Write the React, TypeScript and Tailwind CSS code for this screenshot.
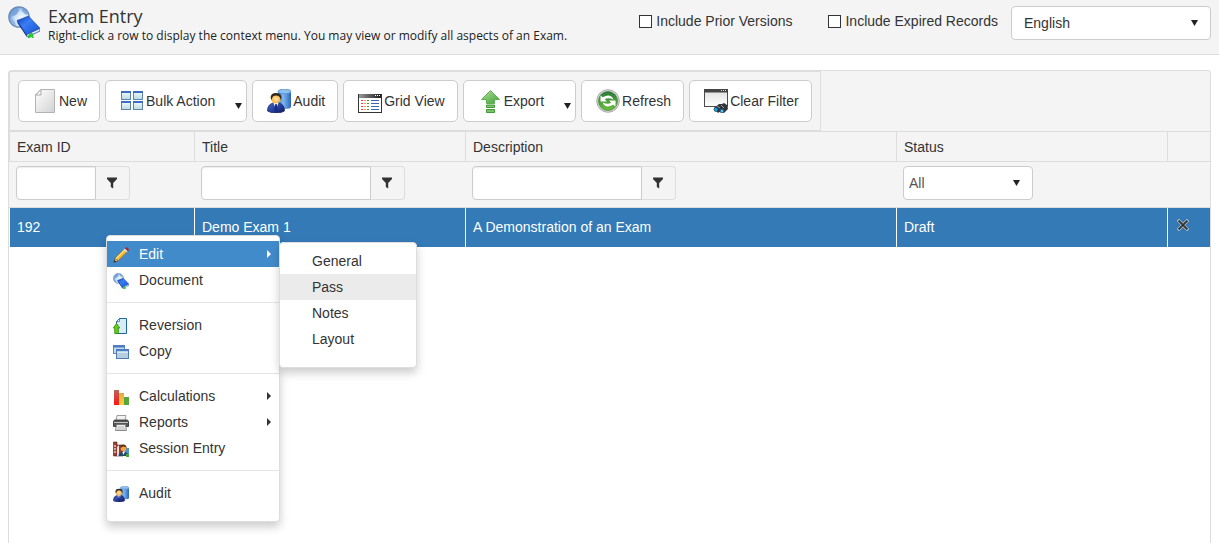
import type { ReactNode } from "react";

function BookIcon({ className }: { className: string }) {
  return (
    <svg viewBox="0 0 32 32" className={className} aria-hidden="true">
      <defs>
        <radialGradient id="globe" cx="0.65" cy="0.6" r="0.7">
          <stop offset="0" stopColor="#ffffff" />
          <stop offset="0.55" stopColor="#c9e0f8" />
          <stop offset="1" stopColor="#4f86cc" />
        </radialGradient>
        <linearGradient id="cover" x1="0" y1="0" x2="1" y2="1">
          <stop offset="0" stopColor="#0d3fae" />
          <stop offset="0.4" stopColor="#3a7df5" />
          <stop offset="1" stopColor="#1450cf" />
        </linearGradient>
      </defs>
      <circle cx="11" cy="11" r="10.2" fill="url(#globe)" stroke="#6c8bb3" strokeWidth="1.2" />
      <path d="M3 9q1-6 7-7l1 3-3 4-3 1zM14 2q5 1 6 7l-3-1-3-3z" fill="#6f9cd8" opacity="0.8" />
      <path d="M3 13q4 1 5 7-4-2-5-7z" fill="#8fb4e4" />
      <path d="M18.500 28.500 31.800 22.500l0.200 2.500-11.500 5.500-2 -0.500z" fill="#dfe7f8" stroke="#0d3cab" strokeWidth="0.700" />
      <path d="M9 14.500 20.500 10 31.800 22 18.500 28.500z" fill="url(#cover)" stroke="#0c38a0" strokeWidth="0.500" />
      <path d="M9 14.500 18.500 28.500 18.800 31 9.500 17z" fill="#0a2f91" />
      <path d="M21 28.500l3-1.500 1.500 5-2-1.200-3.500 1.200z" fill="#24d424" stroke="#0d9a1a" strokeWidth="0.500" />
    </svg>
  );
}

function NewIcon() {
  return (
    <svg viewBox="0 0 24 24" className="size-6" aria-hidden="true">
      <defs>
        <linearGradient id="paper" x1="0" y1="0" x2="1" y2="1">
          <stop offset="0" stopColor="#ffffff" />
          <stop offset="1" stopColor="#d2d2d2" />
        </linearGradient>
      </defs>
      <path d="M8 0.5h13.500v23h-19v-17.500z" fill="url(#paper)" stroke="#b3b3b3" />
      <path d="M2.500 6 8 0.500v5.500z" fill="#f4f4f4" stroke="#999" strokeWidth="0.8" />
    </svg>
  );
}

function BulkIcon() {
  return (
    <svg viewBox="0 0 24 24" className="size-6" aria-hidden="true">
      <defs>
        <linearGradient id="pane" x1="0" y1="0" x2="0" y2="1">
          <stop offset="0" stopColor="#f5fbfd" />
          <stop offset="1" stopColor="#b9d8e2" />
        </linearGradient>
      </defs>
      {[[1, 2], [13, 2], [1, 12], [13, 12]].map(([x, y]) => (
        <g key={`${x}-${y}`}>
          <rect x={x + 0.5} y={y + 0.5} width="9" height="8" fill="url(#pane)" stroke="#5d87a8" />
          <rect x={x} y={y} width="10" height="2" fill="#3c6fc4" />
        </g>
      ))}
    </svg>
  );
}

function AuditIcon({ className }: { className: string }) {
  return (
    <svg viewBox="0 0 24 24" className={className} aria-hidden="true">
      <defs>
        <linearGradient id="cylinder">
          <stop offset="0" stopColor="#3d7fcf" />
          <stop offset="0.4" stopColor="#7db7f2" />
          <stop offset="1" stopColor="#2c66b8" />
        </linearGradient>
        <radialGradient id="face" cx="0.5" cy="0.55" r="0.6">
          <stop offset="0" stopColor="#ffe9b0" />
          <stop offset="1" stopColor="#f79a1a" />
        </radialGradient>
        <linearGradient id="suit" x1="0" y1="0" x2="1" y2="1">
          <stop offset="0" stopColor="#4668c8" />
          <stop offset="1" stopColor="#0b1a66" />
        </linearGradient>
      </defs>
      <path d="M11 2.500v15q0 2.500 6.500 2.500t6.500-2.500v-15z" fill="url(#cylinder)" />
      <ellipse cx="17.500" cy="2.500" rx="6.500" ry="2.300" fill="#8fc0ee" stroke="#4b89cf" strokeWidth="0.8" />
      <path d="M0.500 22q0-7 6-8h5q6 1 6 8-3 2-8.500 2t-8.500-2z" fill="url(#suit)" stroke="#0c1b5c" strokeWidth="0.7" />
      <path d="M6.500 14h5l-2.500 6z" fill="#fff" />
      <path d="M8.300 15h1.500l0.700 6-1.500 2-1.400-2z" fill="#132b8c" />
      <circle cx="9" cy="9.500" r="5" fill="url(#face)" />
      <path d="M3.600 9q0-5 5.400-5t5.500 5l-1 2q0-3-2-4-2.500-1-5 0-1.500 1-1.800 4z" fill="#33281c" />
    </svg>
  );
}

function GridIcon() {
  const rows = [10, 13, 16, 19];
  return (
    <svg viewBox="0 0 24 24" className="size-6" aria-hidden="true">
      <defs>
        <linearGradient id="titlebar">
          <stop offset="0" stopColor="#999" />
          <stop offset="1" stopColor="#1c1c1c" />
        </linearGradient>
      </defs>
      <rect x="0.500" y="5.500" width="23" height="18" fill="#fff" stroke="#333" />
      <rect x="1" y="5" width="22" height="4" fill="url(#titlebar)" />
      <path d="M17 6.500h1M19 6.500h1M21 6.500h1" stroke="#fff" />
      {rows.map(y => (
        <g key={y} transform="translate(0 1.500)" strokeWidth="1">
          <path d={`M3 ${y}h2`} stroke="#e0483c" />
          <path d={`M6 ${y}h2`} stroke="#f3a23a" />
          <path d={`M9 ${y}h2`} stroke="#3e9e33" />
          <path d={`M13 ${y}h8`} stroke="#3f68b4" />
        </g>
      ))}
    </svg>
  );
}

function ExportIcon() {
  return (
    <svg viewBox="0 0 24 24" className="size-6" aria-hidden="true">
      <defs>
        <linearGradient id="up" x1="0" y1="0" x2="1" y2="1">
          <stop offset="0" stopColor="#b4e0a0" />
          <stop offset="1" stopColor="#3ba233" />
        </linearGradient>
      </defs>
      <path d="M12.500 1.500 21.500 10.500h-5v4h-8v-4h-5z" fill="url(#up)" stroke="#5fae4f" />
      <path d="M8.500 16h8v2.500h-8zM8.500 20.500h8v3h-8z" fill="#79c468" stroke="#459a3a" />
    </svg>
  );
}

function RefreshIcon() {
  return (
    <svg viewBox="0 0 24 24" className="size-6" aria-hidden="true">
      <defs>
        <linearGradient id="ball" x1="0" y1="0" x2="0" y2="1">
          <stop offset="0" stopColor="#2a7a38" />
          <stop offset="1" stopColor="#6cc03c" />
        </linearGradient>
      </defs>
      <circle cx="12" cy="12" r="11.300" fill="#dcdcdc" stroke="#a0a0a0" strokeWidth="0.900" />
      <circle cx="12" cy="12" r="9.600" fill="url(#ball)" stroke="#3c7a3a" strokeWidth="0.600" />
      <path d="M4.500 6.500v6h6.500l-2.200-2.200q3-2.300 8.700 0.200Q14.500 4 6.800 8.200z" fill="#fff" />
      <path d="M19.500 17.500v-6h-6.500l2.200 2.200q-3 2.300-8.700-0.200Q9.500 20 17.200 15.800z" fill="#fff" />
    </svg>
  );
}

function ClearFilterIcon() {
  return (
    <svg viewBox="0 0 24 24" className="size-6" aria-hidden="true">
      <defs>
        <linearGradient id="window" x1="0" y1="0" x2="0" y2="1">
          <stop offset="0" stopColor="#dedede" />
          <stop offset="1" stopColor="#ffffff" />
        </linearGradient>
      </defs>
      <rect x="0.500" y="0.500" width="23" height="17" fill="url(#window)" stroke="#4b4b4b" />
      <rect x="0" y="0" width="24" height="3.500" fill="#444" />
      <path d="M17 1.500h1M19 1.500h1M21 1.500h1" stroke="#ddd" />
      <path d="M10 19l5-4 3 0 2-1 3 2 1 4-4 4-3-2-3 2z" fill="#30343a" />
      <path d="M13 17l3 2M17 16l3 3" stroke="#99a" />
      <circle cx="12" cy="20.500" r="2" fill="#19a9f0" stroke="#16344a" strokeWidth="0.700" />
      <circle cx="18" cy="22" r="1.900" fill="#4cc6fb" stroke="#16344a" strokeWidth="0.700" />
    </svg>
  );
}

function PencilIcon() {
  return (
    <svg viewBox="0 0 16 16" className="size-4" aria-hidden="true">
      <path d="M1 15.300 2.200 11 5 13.800z" fill="#e8c79a" stroke="#5b3d1c" strokeWidth="0.600" />
      <path d="M0.600 15.600l1-2.600 1.700 1.600z" fill="#222" />
      <path d="M2.200 11 11 2.200 13.800 5 5 13.800z" fill="#f5b82e" stroke="#9a6412" strokeWidth="0.600" />
      <path d="M3.200 11.600 11.700 3.100" stroke="#ffe58c" strokeWidth="1.200" />
      <path d="M10.500 2.700 12 1.200 14.800 4l-1.500 1.500z" fill="#d5dbe2" />
      <path d="M12 1.200q1.500-1.200 3 0.200t-0.200 2.600z" fill="#c9281e" stroke="#8f1b14" strokeWidth="0.500" />
    </svg>
  );
}

function ReversionIcon() {
  return (
    <svg viewBox="0 0 16 16" className="size-4" aria-hidden="true">
      <path d="M6.500 0.500h7v15h-10v-12z" fill="#d7ecf8" stroke="#1d6698" />
      <path d="M3.500 3.500h3v-3z" fill="#fff" stroke="#1d6698" strokeWidth="0.700" />
      <path d="M3.500 5.500 6.800 10h-1.500v5.500h-3.600V10H0.300z" fill="#62cf16" stroke="#2c8a0a" strokeWidth="0.800" />
    </svg>
  );
}

function CopyIcon() {
  return (
    <svg viewBox="0 0 16 16" className="size-4" aria-hidden="true">
      <rect x="0.500" y="1.500" width="11" height="8" fill="#c5dae8" stroke="#5f86b5" />
      <path d="M0 2.500h12" stroke="#4a7ac4" strokeWidth="2" />
      <rect x="3.500" y="5.500" width="12" height="9" fill="#b5cfe0" stroke="#4f7bac" />
      <path d="M3 6.500h13" stroke="#4a7ecb" strokeWidth="2" />
      <path d="M4 8h11" stroke="#fff" />
    </svg>
  );
}

function ChartIcon() {
  return (
    <svg viewBox="0 0 16 16" className="size-4" aria-hidden="true">
      <defs>
        <linearGradient id="redbar" x1="0" y1="0" x2="0" y2="1">
          <stop offset="0" stopColor="#b9635a" />
          <stop offset="1" stopColor="#ff1515" />
        </linearGradient>
        <linearGradient id="yellowbar" x1="0" y1="0" x2="0" y2="1">
          <stop offset="0" stopColor="#e3a83f" />
          <stop offset="1" stopColor="#ffd23c" />
        </linearGradient>
      </defs>
      <rect x="1" y="1" width="5" height="15" fill="url(#redbar)" />
      <rect x="6" y="4" width="5" height="12" fill="url(#yellowbar)" />
      <rect x="11" y="8" width="5" height="8" fill="#55a63c" />
    </svg>
  );
}

function PrinterIcon() {
  return (
    <svg viewBox="0 0 16 16" className="size-4" aria-hidden="true">
      <path d="M4 0.500h9l-1 5H3z" fill="#f2f2f2" stroke="#888" strokeWidth="0.800" />
      <path d="M1.500 5h13l1 1.500v5h-15v-5z" fill="#555" stroke="#2c2c2c" strokeWidth="0.800" />
      <path d="M1 7.500h14" stroke="#c4c4c4" />
      <path d="M3.500 9.500h9l1 6h-11z" fill="#ededed" stroke="#6e6e6e" strokeWidth="0.800" />
      <path d="M4.500 12h7M4 14h8" stroke="#aaa" strokeWidth="0.800" />
    </svg>
  );
}

function SessionIcon() {
  return (
    <svg viewBox="0 0 16 16" className="size-4" aria-hidden="true">
      <path d="M0.500 1h3.500v3h6v11h-9.500z" fill="#993a2c" stroke="#54271f" strokeWidth="0.600" />
      <path d="M1 5h2M1 8h2M1 11h2" stroke="#d6d0c8" strokeWidth="1.500" />
      <path d="M4 15V6l2-2v11z" fill="#dfe2e6" />
      <path d="M12 7h4v8h-5z" fill="#4f91d5" />
      <path d="M5.500 15q0-4 5-4t5 4z" fill="#27436f" />
      <path d="M9.300 11h2.400l-1.200 3z" fill="#fff" />
      <circle cx="10.500" cy="7.500" r="2.800" fill="#f2a63a" />
      <path d="M7.500 7.500q0-4 3-4t3.200 4q-1-2-3-2t-3.200 2z" fill="#5a2f18" />
      <path d="M13 12.500l3 1V16h-3z" fill="#46a82f" />
    </svg>
  );
}

function FunnelIcon() {
  return (
    <svg viewBox="0 0 12 12" className="size-3" aria-hidden="true">
      <path d="M1 0.500h10v1.500L7.200 6v5.500l-2.400-1.500V6L1 2z" fill="#333" />
    </svg>
  );
}

function DownArrow({ className }: { className: string }) {
  return (
    <svg viewBox="0 0 7 6" className={`h-[6px] w-[7px] ${className}`} aria-hidden="true">
      <path d="M0 0h7L3.500 6z" fill="#222" />
    </svg>
  );
}

function ToolButton({ icon, label, menu }: { icon: ReactNode; label: string; menu?: boolean }) {
  return (
    <button
      type="button"
      className={`relative flex h-[42px] items-center gap-[2px] rounded-[5px] border border-[#ccc] bg-white pl-[14px] ${menu ? "pr-[31px]" : "pr-3"}`}
    >
      {icon}
      {label}
      {menu && <DownArrow className="absolute right-1 bottom-3" />}
    </button>
  );
}

function FilterBox({ label, width }: { label: string; width: string }) {
  return (
    <div className={`flex h-[34px] ${width}`}>
      <input
        type="text"
        aria-label={label}
        className="min-w-0 flex-1 rounded-l border border-[#ccc] bg-white px-2 shadow-[inset_0_1px_1px_rgba(0,0,0,0.08)]"
      />
      <button type="button" aria-label={`${label} options`} className="flex w-[34px] items-center justify-center rounded-r border border-l-0 border-[#ddd] pr-[2px]">
        <FunnelIcon />
      </button>
    </div>
  );
}

function MenuItem({ icon, label, active, sub }: { icon: ReactNode; label: string; active?: boolean; sub?: boolean }) {
  return (
    <li>
      <button
        type="button"
        role="menuitem"
        className={`flex h-[26px] w-full items-center gap-[10px] pr-2 pl-[6px] text-left ${active ? "bg-[#428bca] text-white" : ""}`}
      >
        <span className="pt-[2px]">{icon}</span>
        <span className="flex-1">{label}</span>
        {sub && (
          <svg viewBox="0 0 4 8" className="h-2 w-1" aria-hidden="true">
            <path d="M0 0 4 4 0 8z" fill="currentColor" />
          </svg>
        )}
      </button>
    </li>
  );
}

function Separator() {
  return <li role="separator" className="my-[9px] border-t border-[#e5e5e5]" />;
}

function ContextMenu() {
  return (
    <div className="absolute top-[164px] left-[97px] flex items-start">
      <ul role="menu" className="w-[174px] rounded border border-[#ddd] bg-white pt-[5px] pb-[15px] shadow-[0_5px_10px_rgba(0,0,0,0.2)]">
        <MenuItem icon={<PencilIcon />} label="Edit" active sub />
        <MenuItem icon={<BookIcon className="size-4" />} label="Document" />
        <Separator />
        <MenuItem icon={<ReversionIcon />} label="Reversion" />
        <MenuItem icon={<CopyIcon />} label="Copy" />
        <Separator />
        <MenuItem icon={<ChartIcon />} label="Calculations" sub />
        <MenuItem icon={<PrinterIcon />} label="Reports" sub />
        <MenuItem icon={<SessionIcon />} label="Session Entry" />
        <Separator />
        <MenuItem icon={<AuditIcon className="size-4" />} label="Audit" />
      </ul>
      <ul role="menu" className="mt-[7px] -ml-px w-[138px] rounded border border-[#ddd] bg-white pt-[5px] pb-[15px] shadow-[0_5px_10px_rgba(0,0,0,0.2)]">
        {["General", "Pass", "Notes", "Layout"].map(name => (
          <li key={name}>
            <button
              type="button"
              role="menuitem"
              className={`block h-[26px] w-full pl-8 text-left ${name === "Pass" ? "bg-[#ebebeb]" : ""}`}
            >
              {name}
            </button>
          </li>
        ))}
      </ul>
    </div>
  );
}

const columns = ["Exam ID", "Title", "Description", "Status", ""];
const record = ["192", "Demo Exam 1", "A Demonstration of an Exam", "Draft"];

export default function App() {
  return (
    <div className="flex min-h-screen flex-col bg-white font-['Liberation_Sans',Arial,sans-serif] text-sm text-[#333]">
      <header className="flex h-[55px] items-start border-b border-[#ddd] bg-[#f4f4f4] px-2 pt-[6px]">
        <BookIcon className="size-8 shrink-0" />
        <div className="ml-2 flex-1 font-['Open_Sans',sans-serif]">
          <h1 className="text-lg leading-[21px]">Exam Entry</h1>
          <p className="text-xs leading-[17px] text-[#222]">
            Right-click a row to display the context menu. You may view or modify all aspects of an Exam.
          </p>
        </div>
        <label className="mr-9 flex h-[30px] items-center gap-1">
          <input type="checkbox" className="size-[13px] appearance-none border border-[#333] bg-white" />
          Include Prior Versions
        </label>
        <label className="mr-[13px] flex h-[30px] items-center gap-1">
          <input type="checkbox" className="size-[13px] appearance-none border border-[#333] bg-white" />
          Include Expired Records
        </label>
        <div className="relative w-[200px]">
          <select aria-label="Language" className="h-[34px] w-full appearance-none rounded border border-[#ccc] bg-white px-3">
            <option>English</option>
          </select>
          <DownArrow className="pointer-events-none absolute top-[14px] right-[13px]" />
        </div>
      </header>

      <main className="flex flex-1 flex-col px-2 pt-[15px]">
        <div className="relative flex-1 rounded-t border border-b-0 border-[#ddd]">
          <div className="rounded-t bg-[#f4f4f4]">
            <div className="flex w-fit gap-[5px] border border-[#ddd] p-2">
              <ToolButton icon={<NewIcon />} label="New" />
              <ToolButton icon={<BulkIcon />} label="Bulk Action" menu />
              <ToolButton icon={<AuditIcon className="size-6" />} label="Audit" />
              <ToolButton icon={<GridIcon />} label="Grid View" />
              <ToolButton icon={<ExportIcon />} label="Export" menu />
              <ToolButton icon={<RefreshIcon />} label="Refresh" />
              <ToolButton icon={<ClearFilterIcon />} label="Clear Filter" />
            </div>
          </div>

          <table className="w-full table-fixed border-separate border-spacing-0 text-left">
            <colgroup>
              <col className="w-[185px]" />
              <col className="w-[271px]" />
              <col />
              <col className="w-[271px]" />
              <col className="w-[43px]" />
            </colgroup>
            <thead className="bg-[#f4f4f4]">
              <tr className="h-[31px]">
                {columns.map(name => (
                  <th key={name} className="border-y border-l border-[#ddd] p-0 pl-[7px] font-normal">{name}</th>
                ))}
              </tr>
              <tr className="h-[46px]">
                <td className="border-b border-[#ddd] p-0 pb-1 pl-[7px]"><FilterBox label="Exam ID filter" width="w-[114px]" /></td>
                <td className="border-b border-[#ddd] p-0 pb-1 pl-[7px]"><FilterBox label="Title filter" width="w-[204px]" /></td>
                <td className="border-b border-[#ddd] p-0 pb-1 pl-[7px]"><FilterBox label="Description filter" width="w-[204px]" /></td>
                <td className="border-b border-[#ddd] p-0 pb-1 pl-[7px]">
                  <div className="relative w-[130px]">
                    <select aria-label="Status filter" className="block h-[34px] w-full appearance-none rounded border border-[#ccc] bg-white px-[5px] text-[#555]">
                      <option>All</option>
                    </select>
                    <DownArrow className="pointer-events-none absolute top-[14px] right-[13px]" />
                  </div>
                </td>
                <td className="border-b border-[#ddd]" />
              </tr>
            </thead>
            <tbody>
              <tr className="h-[39px] bg-[#337ab7] text-white">
                {record.map(value => (
                  <td key={value} className="border-l border-white p-0 pb-[2px] pl-[7px]">{value}</td>
                ))}
                <td className="border-l border-white p-0 pb-[6px] pl-[9px]">
                  <button type="button" aria-label="Delete" className="block">
                    <svg viewBox="0 0 12 12" className="size-3" aria-hidden="true">
                      <path d="M2 2l8 8M10 2l-8 8" stroke="#e8e4dc" strokeWidth="3" strokeLinecap="square" />
                      <path d="M1.500 1.500l9 9M10.500 1.500l-9 9" stroke="#333" strokeWidth="1.800" />
                    </svg>
                  </button>
                </td>
              </tr>
            </tbody>
          </table>

          <ContextMenu />
        </div>
      </main>
    </div>
  );
}
